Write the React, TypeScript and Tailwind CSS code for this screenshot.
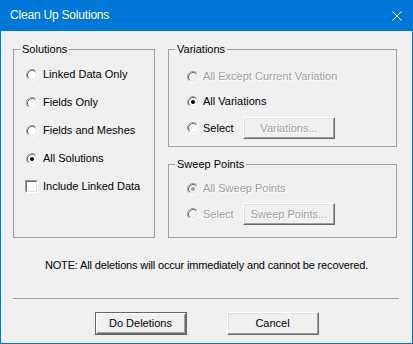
import React from 'react';

// classic 3D radio, drawn as arcs
function Radio({ checked = false, disabled = false }: { checked?: boolean; disabled?: boolean }) {
  return (
    <svg width="12" height="12" viewBox="0 0 12 12" className="shrink-0">
      <circle cx="6" cy="6" r="4.5" fill={disabled ? '#f0f0f0' : '#ffffff'} />
      <path d="M2.11 9.89 A5.5 5.5 0 0 1 9.89 2.11" fill="none" stroke="#a0a0a0" strokeWidth="1" />
      <path d="M9.89 2.11 A5.5 5.5 0 0 1 2.11 9.89" fill="none" stroke="#ffffff" strokeWidth="1" />
      <path d="M2.82 9.18 A4.5 4.5 0 0 1 9.18 2.82" fill="none" stroke="#696969" strokeWidth="1" />
      <path d="M9.18 2.82 A4.5 4.5 0 0 1 2.82 9.18" fill="none" stroke="#e3e3e3" strokeWidth="1" />
      {checked && <circle cx="6" cy="6" r="2" fill={disabled ? '#a0a0a0' : '#000000'} />}
    </svg>
  );
}

function Checkbox() {
  return (
    <div className="w-[13px] h-[13px] shrink-0 border border-t-[#a0a0a0] border-l-[#a0a0a0] border-r-white border-b-white">
      <div className="w-full h-full bg-white border border-t-[#696969] border-l-[#696969] border-r-[#e3e3e3] border-b-[#e3e3e3]" />
    </div>
  );
}

function Button({ label, isDefault = false, disabled = false, h = 'h-[23px]' }: { label: string; isDefault?: boolean; disabled?: boolean; h?: string }) {
  const text = disabled ? 'text-[#a0a0a0] [text-shadow:1px_1px_0_#ffffff]' : 'text-black';
  if (isDefault) {
    return (
      <div className={`w-[92px] ${h} border border-[#646464]`}>
        <div className="w-full h-full border border-t-white border-l-white border-r-[#696969] border-b-[#696969]">
          <div className={`w-full h-full border border-r-[#a0a0a0] border-b-[#a0a0a0] border-t-[#f0f0f0] border-l-[#f0f0f0] flex items-center justify-center ${text}`}>
            {label}
          </div>
        </div>
      </div>
    );
  }
  return (
    <div className={`w-[92px] ${h} border border-t-white border-l-white border-r-[#696969] border-b-[#696969]`}>
      <div className={`w-full h-full border border-t-[#e3e3e3] border-l-[#e3e3e3] border-r-[#a0a0a0] border-b-[#a0a0a0] flex items-center justify-center ${text}`}>
        {label}
      </div>
    </div>
  );
}

function Group({ title, className, children }: { title: string; className: string; children: React.ReactNode }) {
  return (
    <div className={`border border-[#a0a0a0] flex flex-col ${className}`}>
      <div className="-mt-[7px] ml-[6px] px-[2px] w-fit h-[13px] leading-[13px] bg-[#f0f0f0]">{title}</div>
      {children}
    </div>
  );
}

const dim = 'text-[#a0a0a0] [text-shadow:1px_1px_0_#ffffff]';

export default function App() {
  return (
    <div className="w-[413px] h-[344px] bg-[#f0f0f0] border-x border-b border-[#0078d7] flex flex-col font-['Liberation_Sans',Arial,sans-serif] text-[11px] leading-[13px] text-black select-none">
      {/* title bar */}
      <div className="h-[31px] shrink-0 bg-[#0078d7] flex items-center justify-between pl-[9px] pr-[10px]">
        <span className="text-white text-[12px] tracking-[-0.2px]">Clean Up Solutions</span>
        <svg width="10" height="10" viewBox="0 0 10 10">
          <path d="M0.5 0.5 L9.5 9.5 M9.5 0.5 L0.5 9.5" stroke="#ffffff" strokeWidth="1" />
        </svg>
      </div>

      <div className="flex pl-[12px] mt-[18px]">
        <Group title="Solutions" className="w-[142px] h-[189px]">
          <div className="flex flex-col gap-[15px] mt-[12px]">
            <div className="h-[13px] flex items-center gap-[5px] pl-[12px]"><Radio /> Linked Data Only</div>
            <div className="h-[13px] flex items-center gap-[5px] pl-[12px]"><Radio /> Fields Only</div>
            <div className="h-[13px] flex items-center gap-[5px] pl-[12px]"><Radio /> Fields and Meshes</div>
            <div className="h-[13px] flex items-center gap-[5px] pl-[12px]"><Radio checked /> All Solutions</div>
            <div className="h-[13px] flex items-center gap-[5px] pl-[11px]"><Checkbox /> Include Linked Data</div>
          </div>
        </Group>

        <div className="ml-[13px] flex flex-col gap-[17px]">
          <Group title="Variations" className="w-[229px] h-[98px]">
            <div className={`h-[13px] mt-[14px] flex items-center gap-[4px] pl-[18px] ${dim}`}>
              <Radio disabled /> All Except Current Variation
            </div>
            <div className="h-[13px] mt-[12px] flex items-center gap-[4px] pl-[18px]">
              <Radio checked /> All Variations
            </div>
            <div className="h-[22px] mt-[9px] flex items-center gap-[4px] pl-[18px]">
              <Radio />
              <span className="w-[36px]">Select</span>
              <Button label="Variations..." disabled h="h-[22px]" />
            </div>
          </Group>

          <Group title="Sweep Points" className="w-[229px] h-[74px]">
            <div className={`h-[13px] mt-[11px] flex items-center gap-[4px] pl-[18px] ${dim}`}>
              <Radio checked disabled /> All Sweep Points
            </div>
            <div className="h-[22px] mt-[8px] flex items-center gap-[4px] pl-[18px]">
              <Radio disabled />
              <span className={`w-[36px] ${dim}`}>Select</span>
              <Button label="Sweep Points..." disabled h="h-[22px]" />
            </div>
          </Group>
        </div>
      </div>

      <p className="mt-[21px] text-center tracking-[-0.15px]">NOTE: All deletions will occur immediately and cannot be recovered.</p>

      <div className="mt-[26px] ml-[12px] mr-[13px] h-px bg-[#a0a0a0]" />

      <div className="mt-[13px] flex justify-center gap-[40px]">
        <Button label="Do Deletions" isDefault />
        <Button label="Cancel" />
      </div>
    </div>
  );
}
